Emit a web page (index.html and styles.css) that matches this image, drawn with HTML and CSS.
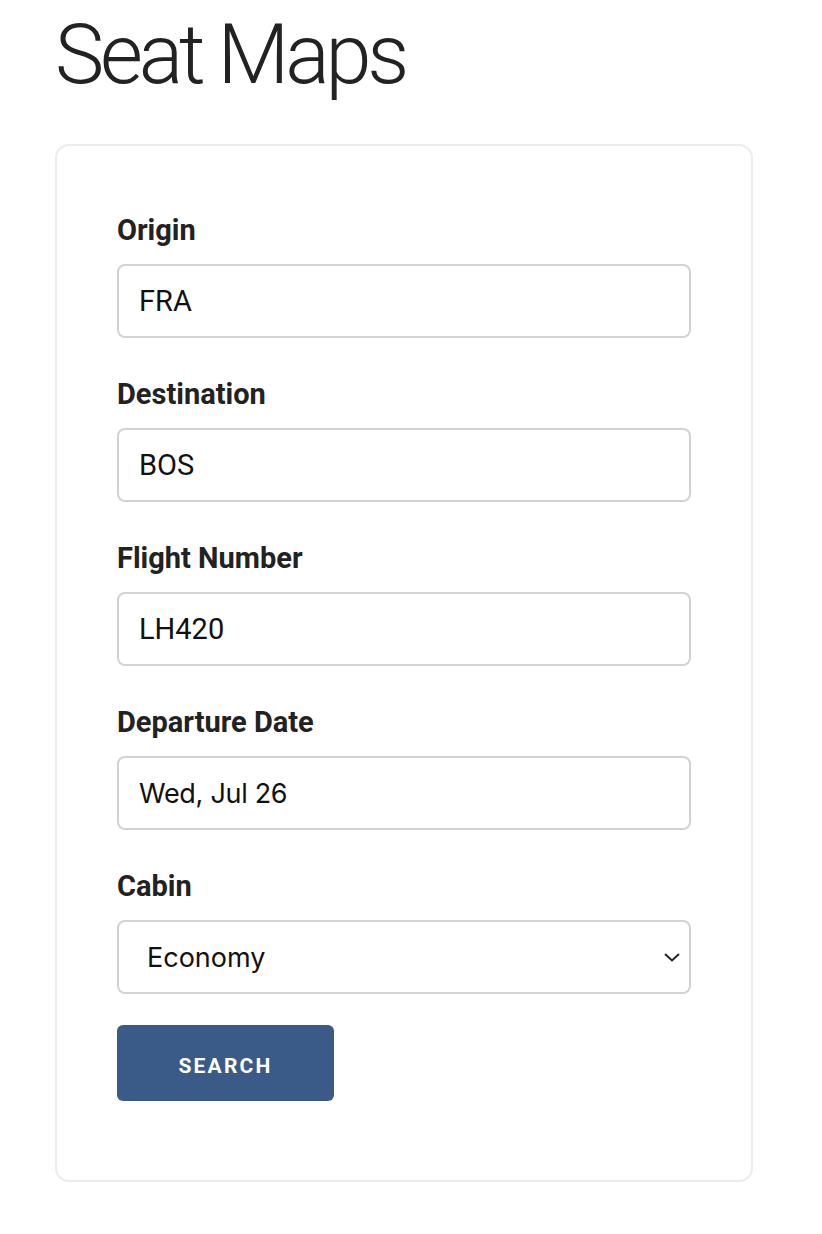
FILE: index.html
```html
<!DOCTYPE html>
<html lang="en">
<head>
<meta charset="utf-8">
<title>Seat Maps</title>
<link rel="stylesheet" href="styles.css">
</head>
<body>
<main class="page">
  <h1 class="title">Seat Maps</h1>
  <form class="card">
    <div class="field">
      <label class="label" for="origin">Origin</label>
      <input class="input" id="origin" type="text" value="FRA">
    </div>
    <div class="field">
      <label class="label" for="dest">Destination</label>
      <input class="input" id="dest" type="text" value="BOS">
    </div>
    <div class="field">
      <label class="label" for="flight">Flight Number</label>
      <input class="input" id="flight" type="text" value="LH420">
    </div>
    <div class="field">
      <label class="label" for="date">Departure Date</label>
      <div class="input input-sys">Wed, Jul 26</div>
    </div>
    <div class="field field-last">
      <label class="label" for="cabin">Cabin</label>
      <div class="select">
        <span class="select-text">Economy</span>
        <svg class="chevron" width="18" height="12" viewBox="0 0 18 12"><path d="M2 3 L9 9.5 L16 3" fill="none" stroke="#222" stroke-width="2"/></svg>
      </div>
    </div>
    <button class="button" type="button">SEARCH</button>
  </form>
</main>
</body>
</html>
```
FILE: styles.css
```css
* { box-sizing: border-box; }
html, body { margin: 0; padding: 0; background: #fff; }
body { font-family: Roboto, "Liberation Sans", sans-serif; color: #222; }
.page { padding: 0 0 0 55px; width: 753px; }
.title {
  margin: 0;
  padding: 0 0 0 0;
  font-size: 83px;
  line-height: 110px;
  font-weight: 300;
  letter-spacing: -4.2px;
  color: #222;
  height: 144px;
}
.card {
  width: 698px;
  height: 1038px;
  border: 2px solid #ececec;
  border-radius: 14px;
  padding: 66px 60px 0 60px;
  display: flex;
  flex-direction: column;
}
.field { display: flex; flex-direction: column; margin-bottom: 38px; }
.field-last { margin-bottom: 31px; }
.label {
  font-size: 29px;
  line-height: 36px;
  font-weight: 700;
  color: #222;
  margin-bottom: 16px;
}
.input {
  width: 574px;
  height: 74px;
  border: 2px solid #d2d2d2;
  border-radius: 8px;
  padding: 0 20px;
  font-family: Roboto, sans-serif;
  font-size: 29px;
  color: #111;
  background: #fff;
  outline: none;
  display: flex;
  align-items: center;
}
.input-sys { font-family: Inter, "Liberation Sans", sans-serif; font-size: 27px; letter-spacing: -0.3px; }
.select {
  width: 574px;
  height: 74px;
  border: 2px solid #d2d2d2;
  border-radius: 8px;
  padding: 0 8px 0 28px;
  display: flex;
  align-items: center;
  justify-content: space-between;
}
.select-text { font-family: Inter, "Liberation Sans", sans-serif; font-size: 27px; color: #111; }
.button {
  width: 217px;
  height: 76px;
  border: none;
  border-radius: 6px;
  background: #3a5b87;
  color: #fff;
  font-family: Roboto, sans-serif;
  font-weight: 700;
  font-size: 21px;
  letter-spacing: 2.2px;
  padding: 5px 0 0 0;
}
```
